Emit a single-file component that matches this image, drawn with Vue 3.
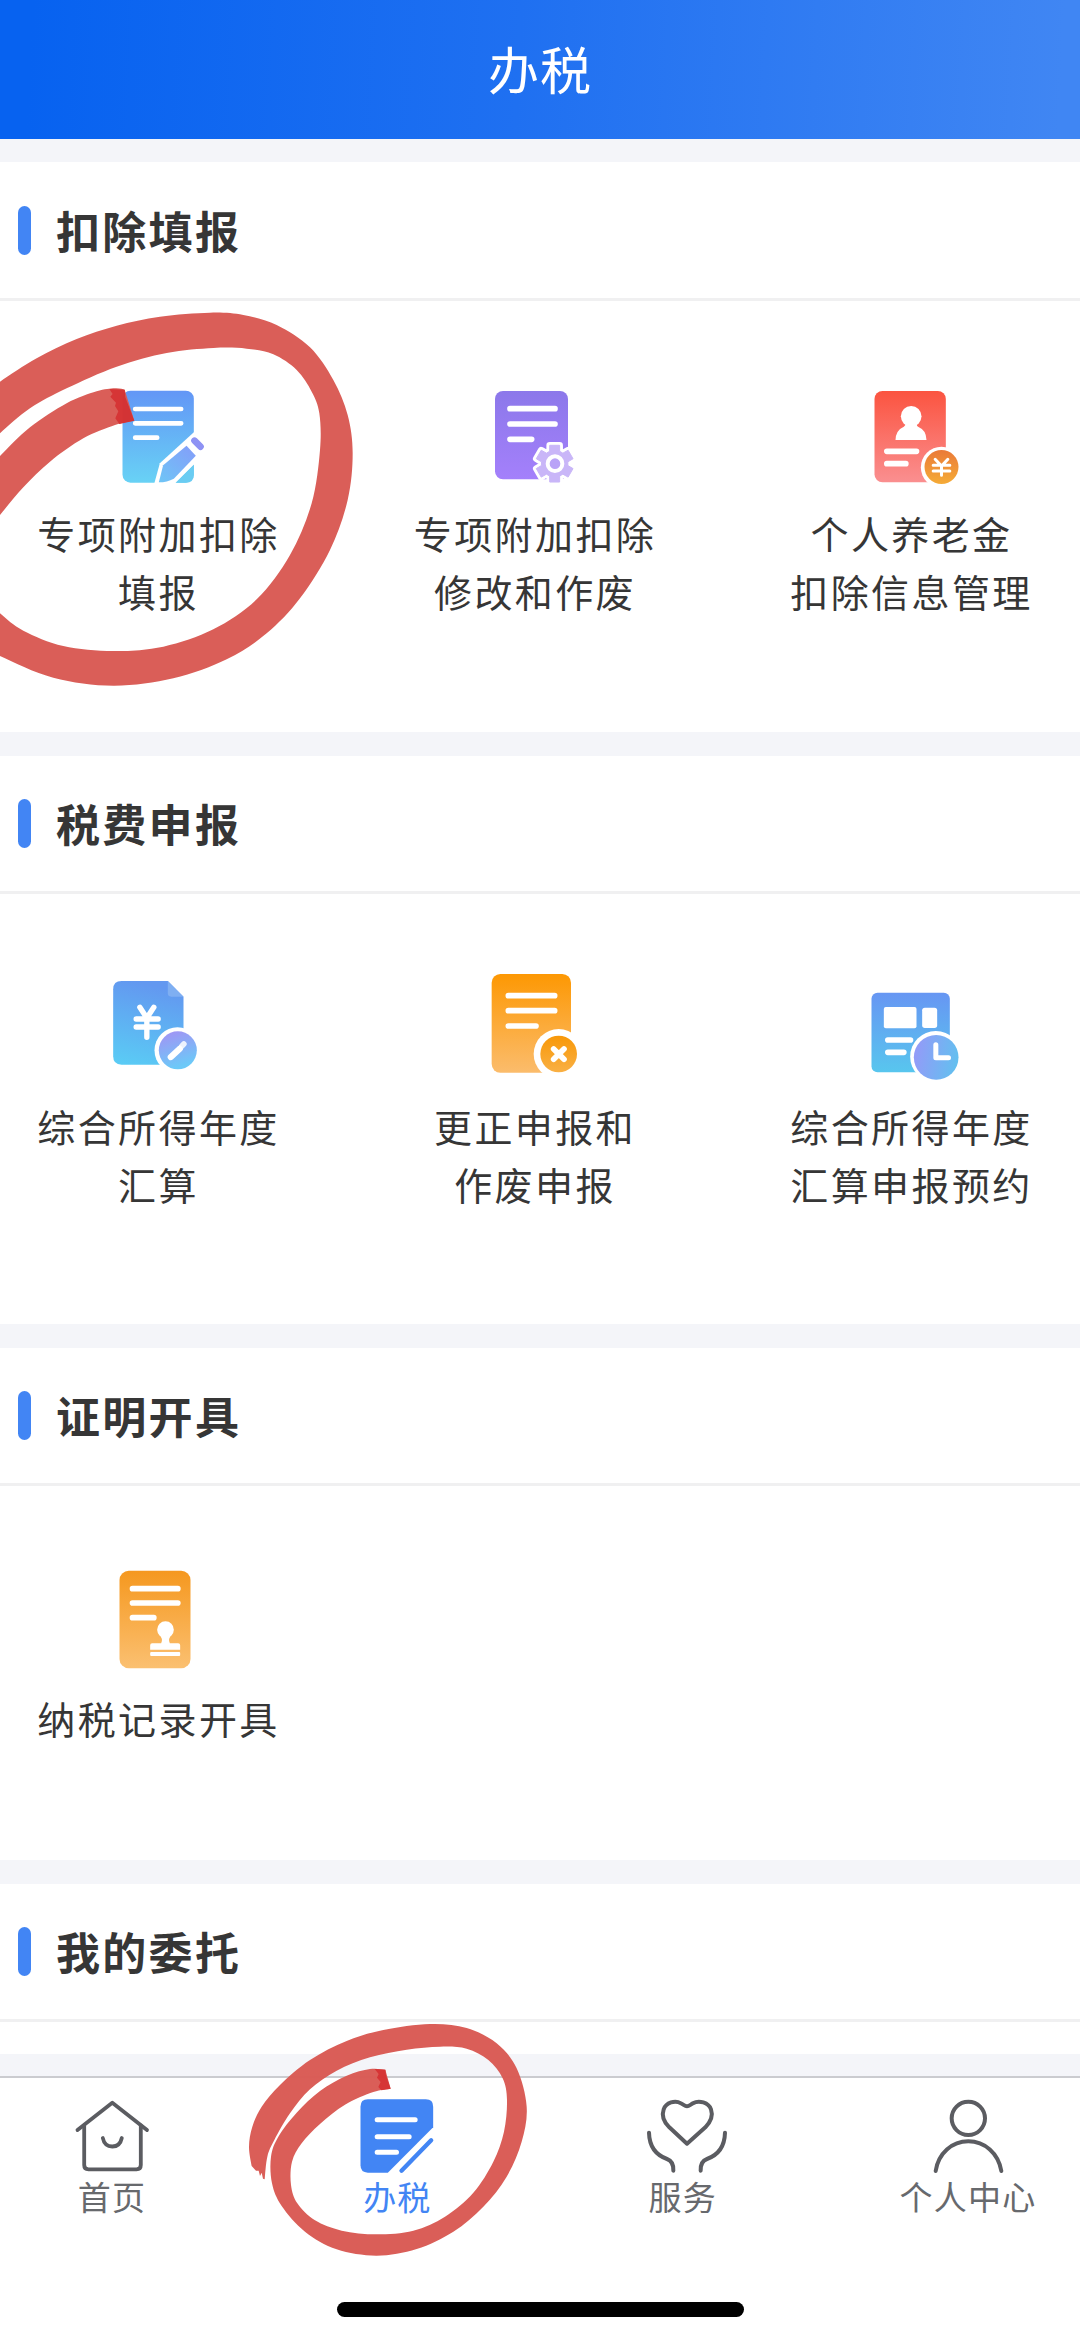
<script setup>
const sections = [
  {
    title: '扣除填报',
    size: 'first',
    items: [
      { icon: 'fill', lines: ['专项附加扣除', '填报'] },
      { icon: 'modify', lines: ['专项附加扣除', '修改和作废'] },
      { icon: 'pension', lines: ['个人养老金', '扣除信息管理'] },
    ],
  },
  {
    title: '税费申报',
    size: 'second',
    items: [
      { icon: 'annual', lines: ['综合所得年度', '汇算'] },
      { icon: 'correct', lines: ['更正申报和', '作废申报'] },
      { icon: 'booking', lines: ['综合所得年度', '汇算申报预约'] },
    ],
  },
  {
    title: '证明开具',
    size: 'third',
    items: [{ icon: 'record', lines: ['纳税记录开具'] }],
  },
  { title: '我的委托', size: 'last', items: [] },
]

const boxes = {
  fill: '295.5 267 360 348',
  modify: '285 27 360 348',
  pension: '274.5 27 360 348',
  annual: '295.5 69 360 348',
  correct: '225 69 360 348',
  booking: '274.5 69 360 348',
  record: '295.5 75 360 348',
}

const tabs = [
  { icon: 'home', label: '首页', box: '0 0 90 80' },
  { icon: 'tax', label: '办税', box: '364.5 258 270 240' },
  { icon: 'service', label: '服务', box: '231 168 270 240' },
  { icon: 'me', label: '个人中心', box: '1086 168 270 240' },
]

// Catmull-Rom spline through the points, as cubic segments
function curve(pts) {
  let d = ''
  for (let i = 0; i < pts.length - 1; i++) {
    const a = pts[i - 1] || pts[i]
    const b = pts[i]
    const c = pts[i + 1]
    const e = pts[i + 2] || c
    d += `C${b[0] + (c[0] - a[0]) / 6} ${b[1] + (c[1] - a[1]) / 6} ${c[0] - (e[0] - b[0]) / 6} ${c[1] - (e[1] - b[1]) / 6} ${c[0]} ${c[1]}`
  }
  return d
}
function band(outer, inner, tail = []) {
  return `M${outer[0]}${curve(outer)}L${inner[0]}${curve(inner)}${tail.map((p) => 'L' + p).join('')}Z`
}
function gear(cx, cy, r, inner) {
  const pts = []
  for (let i = 0; i < 6; i++) {
    const base = -90 + i * 60
    for (const [o, rad] of [[-22, inner], [-15, r], [15, r], [22, inner]]) {
      const t = ((base + o) * Math.PI) / 180
      pts.push(`${(cx + rad * Math.cos(t)).toFixed(1)} ${(cy + rad * Math.sin(t)).toFixed(1)}`)
    }
  }
  return `M${pts.join('L')}Z`
}
const gearD = gear(524, 281, 57, 40)

const loopBig = band(
  [[-60, 318], [0, 275], [110, 205], [230, 147], [350, 107], [480, 80], [630, 68], [730, 75], [830, 105], [930, 172], [1000, 270], [1043, 375], [1058, 490], [1043, 630], [990, 780], [900, 925], [800, 1030], [680, 1108], [520, 1165], [340, 1187], [160, 1163], [0, 1098], [-60, 1060]],
  [[-60, 910], [0, 970], [70, 1022], [190, 1068], [340, 1083], [490, 1070], [640, 1018], [770, 928], [870, 795], [935, 640], [960, 480], [958, 370], [935, 305], [890, 240], [820, 193], [740, 176], [640, 174], [500, 189], [350, 230], [200, 295], [90, 355], [0, 430], [-60, 490]],
)
const loopBigEnd = band(
  [[-60, 560], [0, 498], [90, 412], [200, 340], [290, 304], [345, 295], [374, 299]],
  [[403, 392], [345, 405], [250, 445], [150, 515], [70, 592], [0, 675], [-60, 750]],
)
const loopSmall = band(
  [[65, 468], [57, 410], [67, 350], [95, 290], [150, 225], [240, 150], [350, 93], [460, 60], [600, 42], [710, 54], [800, 100], [860, 175], [890, 290], [875, 395], [830, 500], [760, 590], [670, 665], [560, 717], [440, 737], [320, 718], [225, 665], [155, 588], [126, 520], [123, 440], [145, 380], [200, 308], [270, 243], [350, 197], [420, 177], [466, 179]],
  [[482, 236], [430, 246], [345, 284], [270, 342], [215, 400], [186, 455], [183, 525], [202, 580], [255, 631], [335, 662], [440, 673], [550, 662], [645, 620], [730, 548], [790, 455], [822, 365], [831, 270], [818, 205], [775, 150], [710, 116], [630, 110], [530, 119], [420, 142], [320, 182], [240, 238], [180, 310], [133, 390], [112, 440], [104, 508]],
  [[99, 506], [95, 488], [90, 498], [86, 482], [78, 482]],
)
</script>

<template>
  <div class="page">
    <header class="topbar"><h1>办税</h1></header>

    <main class="content">
      <section v-for="s in sections" :key="s.title" class="card" :class="s.size">
        <h2 class="card-title"><i class="bar"></i>{{ s.title }}</h2>
        <div v-if="s.items.length" class="grid">
          <div v-for="it in s.items" :key="it.icon" class="item">
            <svg class="icon" :viewBox="boxes[it.icon]">
              <template v-if="it.icon === 'fill'">
                <defs>
                  <linearGradient id="gFill" x1="0" y1="0" x2="0" y2="1"><stop offset="0" stop-color="#6396f6" /><stop offset="1" stop-color="#68d2f5" /></linearGradient>
                  <linearGradient id="gPen" gradientUnits="userSpaceOnUse" x1="590" y1="440" x2="480" y2="575"><stop offset="0" stop-color="#8896fa" /><stop offset="1" stop-color="#6fc4f6" /></linearGradient>
                </defs>
                <rect x="366" y="302" width="214" height="276" rx="24" fill="url(#gFill)" />
                <path d="M404 357H542M404 400H542M404 443H470" class="ln" />
                <path d="M461 582L478 520L580 427L625 480L522 582Z" fill="#fff" />
                <path d="M475 577L488 526L558 467L586 497L520 566Q500 577 475 577Z" fill="url(#gPen)" />
                <path d="M582 452L600 470" stroke="#8e92f4" stroke-width="20" stroke-linecap="round" />
                <path d="M526 578L580 524V554Q580 578 556 578Z" fill="#6accf2" />
              </template>

              <template v-else-if="it.icon === 'modify'">
                <defs><linearGradient id="gMod" x1="0" y1="0" x2="0" y2="1"><stop offset="0" stop-color="#8c78ea" /><stop offset="1" stop-color="#a480fb" /></linearGradient></defs>
                <rect x="345" y="63" width="219" height="265" rx="24" fill="url(#gMod)" />
                <path d="M390 116H525M390 162H525M390 208H455" class="ln" style="stroke-width: 17" />
                <path :d="gearD" fill="#fff" stroke="#fff" stroke-width="20" stroke-linejoin="round" />
                <path :d="gearD" fill="#c9b6f8" stroke="#c9b6f8" stroke-width="3" stroke-linejoin="round" />
                <circle cx="525" cy="281" r="22" fill="#b9a3f7" stroke="#fff" stroke-width="12" />
              </template>

              <template v-else-if="it.icon === 'pension'">
                <defs>
                  <linearGradient id="gPens" x1="0" y1="0" x2="0" y2="1"><stop offset="0" stop-color="#fb5440" /><stop offset="1" stop-color="#fa8f90" /></linearGradient>
                  <linearGradient id="gCoin" x1="0" y1="0" x2="0" y2="1"><stop offset="0" stop-color="#ea7a38" /><stop offset="1" stop-color="#f5ab37" /></linearGradient>
                </defs>
                <rect x="342" y="63" width="214" height="274" rx="24" fill="url(#gPens)" />
                <circle cx="452" cy="139" r="31" fill="#fff" />
                <path d="M436 160H468Q468 168 474 171Q497 180 498 210H405Q406 180 430 170Q436 166 436 160Z" fill="#fff" />
                <path d="M379 244H468M379 281H436" class="ln" style="stroke-width: 17" />
                <circle cx="543" cy="292" r="62" fill="#fff" />
                <circle cx="543" cy="291" r="51" fill="url(#gCoin)" />
                <path d="M524 268L543 288L562 268M543 288V316M518 286H568M518 303H568" fill="none" stroke="#fff" stroke-width="9" stroke-linecap="round" />
              </template>

              <template v-else-if="it.icon === 'annual'">
                <defs>
                  <linearGradient id="gAnn" x1="0.3" y1="0" x2="0.1" y2="1"><stop offset="0" stop-color="#6398f0" /><stop offset="1" stop-color="#5accf5" /></linearGradient>
                  <linearGradient id="gEdit" x1="0" y1="0" x2="0.3" y2="1"><stop offset="0" stop-color="#a590f4" /><stop offset="1" stop-color="#6cc9f8" /></linearGradient>
                </defs>
                <path d="M363 93H502L549 140V344H363Q338 344 338 319V118Q338 93 363 93Z" fill="url(#gAnn)" />
                <path d="M502 93L549 140H512Q502 140 502 130Z" fill="#7fafF2" />
                <path d="M418 172L439 204L460 172M439 204V262M407 207H473M407 231H473" fill="none" stroke="#fff" stroke-width="16" stroke-linecap="round" />
                <circle cx="531" cy="301" r="69" fill="#fff" />
                <circle cx="532" cy="301" r="57" fill="url(#gEdit)" />
                <path d="M511 321L537 297" stroke="#fff" stroke-width="19" stroke-linecap="round" />
                <path d="M534 288L545 300" stroke="#fff" stroke-width="10" />
                <path d="M545 287L550 282" stroke="#fff" stroke-width="17" stroke-linecap="round" opacity=".85" />
              </template>

              <template v-else-if="it.icon === 'correct'">
                <defs>
                  <linearGradient id="gCor" x1="0" y1="0" x2="0" y2="1"><stop offset="0" stop-color="#fd9803" /><stop offset="1" stop-color="#fbbc6c" /></linearGradient>
                  <linearGradient id="gX" x1="0" y1="0" x2="0" y2="1"><stop offset="0" stop-color="#f89808" /><stop offset="1" stop-color="#f9b044" /></linearGradient>
                </defs>
                <rect x="275" y="72" width="238" height="296" rx="26" fill="url(#gCor)" />
                <path d="M325 137H464M325 182H464M325 228H408" class="ln" style="stroke-width: 17" />
                <circle cx="476" cy="312" r="75" fill="#fff" />
                <circle cx="476" cy="312" r="55" fill="url(#gX)" />
                <path d="M461 297L492 328M492 297L461 328" stroke="#fff" stroke-width="17" stroke-linecap="round" />
              </template>

              <template v-else-if="it.icon === 'booking'">
                <defs>
                  <linearGradient id="gBook" x1="0" y1="0" x2="0" y2="1"><stop offset="0" stop-color="#6796f3" /><stop offset="1" stop-color="#58c6ee" /></linearGradient>
                  <linearGradient id="gClock" x1="0" y1="0.4" x2="1" y2="0.6"><stop offset="0" stop-color="#949af8" /><stop offset="1" stop-color="#62c0ef" /></linearGradient>
                </defs>
                <rect x="333" y="128" width="235" height="239" rx="18" fill="url(#gBook)" />
                <rect x="370" y="171" width="98" height="64" rx="6" fill="#fff" />
                <rect x="485" y="173" width="45" height="61" rx="8" fill="#fff" />
                <path d="M382 270H450M382 307H430" class="ln" style="stroke-width: 17" />
                <circle cx="526" cy="320" r="77" fill="#fff" />
                <circle cx="527" cy="322" r="67" fill="url(#gClock)" />
                <path d="M526 284V323H564" fill="none" stroke="#fff" stroke-width="15" stroke-linecap="round" stroke-linejoin="round" />
              </template>

              <template v-else>
                <defs><linearGradient id="gRec" x1="0" y1="0" x2="0" y2="1"><stop offset="0" stop-color="#f5981f" /><stop offset="1" stop-color="#fbc071" /></linearGradient></defs>
                <rect x="357" y="92" width="213" height="293" rx="28" fill="url(#gRec)" />
                <path d="M396 146H532M396 189H532M396 233H460" class="ln" style="stroke-width: 17" />
                <circle cx="495" cy="269" r="25" fill="#fff" />
                <path d="M475 282Q489 296 482 310H455Q449 310 449 316V329H539V316Q539 310 533 310H508Q501 296 515 282Z" fill="#fff" />
                <rect x="449" y="336" width="90" height="12" rx="3" fill="#fff" />
              </template>
            </svg>
            <p class="label"><span v-for="l in it.lines" :key="l">{{ l }}</span></p>
          </div>
        </div>
      </section>
    </main>

    <nav class="tabbar">
      <a v-for="t in tabs" :key="t.icon" class="tab" :class="{ active: t.icon === 'tax' }">
        <svg class="tab-icon" :viewBox="t.box">
          <g v-if="t.icon === 'home'" class="line thin">
            <path d="M10.5 34L45.3 6.8L80 34" />
            <path d="M17.2 29.5V69Q17.2 73.3 21.5 73.3H69.5Q73.8 73.3 73.8 69V29.5" />
            <path d="M35.8 42Q37.5 50.5 45.3 50.5Q53 50.5 54.8 42" />
          </g>
          <g v-else-if="t.icon === 'tax'">
            <path d="M412 268H586Q608 268 608 290V352L472 488H412Q390 488 390 466V290Q390 268 412 268Z" fill="#4285f4" />
            <path d="M440 329H554M440 380H536M440 427H498" class="ln" style="stroke-width: 15" />
            <path d="M513 482L602 391" stroke="#4285f4" stroke-width="13" stroke-linecap="round" />
          </g>
          <g v-else-if="t.icon === 'service'" class="line">
            <path d="M378 311L325 262C307 244 302 225 308 208C315 188 342 179 360 190C370 196 373 199 378 199C383 199 386 196 396 190C414 179 443 188 450 208C456 225 450 244 433 262Z" />
            <path d="M264 278C265 320 287 346 318 357C332 362 338 372 337 392" />
            <path d="M492 278C491 320 469 346 438 357C424 362 418 372 419 392" />
          </g>
          <g v-else class="line">
            <circle cx="1222" cy="235" r="50" />
            <path d="M1124 393C1132 340 1173 304 1222 304S1312 340 1321 393" />
          </g>
        </svg>
        <span>{{ t.label }}</span>
      </a>
    </nav>
    <i class="home-indicator"></i>

    <svg class="mark mark-big" viewBox="0 0 1140 1260">
      <path :d="loopBig" />
      <path :d="loopBigEnd" />
      <path class="tip" d="M328 297L374 299L376 322L403 392L358 402L346 385L355 364L345 348L348 338L331 320L338 312Z" />
    </svg>
    <svg class="mark mark-small" viewBox="0 0 930 780">
      <path :d="loopSmall" />
      <path class="tip" d="M434 177L466 179L468 196L482 236L454 241L445 231L452 216L441 203L446 192Z" />
    </svg>
  </div>
</template>

<style>
body {
  margin: 0;
}
</style>

<style scoped>
.page {
  position: relative;
  display: flex;
  flex-direction: column;
  width: 1080px;
  height: 2340px;
  overflow: hidden;
  background: #fff;
  color: #363636;
  font-family: 'Noto Sans CJK SC', 'Noto Sans', sans-serif;
}
.topbar {
  display: flex;
  align-items: flex-start;
  justify-content: center;
  flex: none;
  height: 139px;
  background: linear-gradient(93deg, #0762f0 3%, #1f70f1 48%, #4086f3 98%);
}
.topbar h1 {
  margin: 38px 0 0;
  color: #fff;
  font-size: 51px;
  font-weight: 400;
  line-height: 60px;
  letter-spacing: 1px;
}
.content {
  display: flex;
  flex-direction: column;
  flex: none;
  gap: 24px;
  box-sizing: border-box;
  height: 1937px;
  padding-top: 23px;
  background: #f4f5f9;
}
.card {
  flex: none;
  background: #fff;
}
.first {
  height: 570px;
}
.second {
  height: 568px;
}
.third {
  height: 512px;
}
.last {
  height: 170px;
}
.card-title {
  display: flex;
  align-items: center;
  gap: 25px;
  box-sizing: border-box;
  height: 138px;
  margin: 0;
  padding: 0 0 1px 18px;
  border-bottom: 3px solid #f0f0f1;
  font-size: 44px;
  font-weight: 700;
  letter-spacing: 2.3px;
}
.first .card-title {
  height: 139px;
  padding-bottom: 0;
}
.bar {
  width: 13px;
  height: 49px;
  border-radius: 7px;
  background: #4285f4;
}
.grid {
  display: flex;
  justify-content: space-between;
  padding: 79px 47px 0 37px;
}
.first .grid {
  padding-top: 78px;
}
.item {
  display: flex;
  flex-direction: column;
  align-items: center;
  width: 243px;
}
.icon {
  width: 120px;
  height: 116px;
}
.ln {
  fill: none;
  stroke: #fff;
  stroke-width: 14;
  stroke-linecap: round;
}
.label {
  display: flex;
  flex-direction: column;
  align-items: center;
  margin: 8px 0 0;
  font-size: 38px;
  line-height: 58px;
  letter-spacing: 2.4px;
  white-space: nowrap;
}
.first .label {
  margin-top: 9px;
}
.tabbar {
  display: flex;
  justify-content: space-between;
  flex: none;
  height: 180px;
  box-sizing: border-box;
  padding: 18px 42px 0 42px;
  border-top: 2px solid #cbccd0;
}
.tab {
  display: flex;
  flex-direction: column;
  align-items: center;
  width: 140px;
  color: #67696d;
  font-size: 33px;
  line-height: 40px;
  letter-spacing: 1.2px;
  white-space: nowrap;
}
.tab.active {
  color: #4285f4;
}
.tab-icon {
  width: 90px;
  height: 80px;
}
.line {
  fill: none;
  stroke: #5b5c61;
  stroke-width: 12;
  stroke-linecap: round;
  stroke-linejoin: round;
}
.thin {
  stroke-width: 3.8;
}
.home-indicator {
  align-self: center;
  width: 407px;
  height: 15px;
  margin-top: 46px;
  border-radius: 8px;
  background: #000;
}
.mark {
  position: absolute;
  fill: #da5b55;
  opacity: 0.98;
  pointer-events: none;
}
.mark-big {
  left: 0;
  top: 290px;
  width: 380px;
  height: 420px;
}
.mark-small {
  left: 230px;
  top: 2010px;
  width: 310px;
  height: 260px;
}
.tip {
  fill: #d63132;
}
</style>
